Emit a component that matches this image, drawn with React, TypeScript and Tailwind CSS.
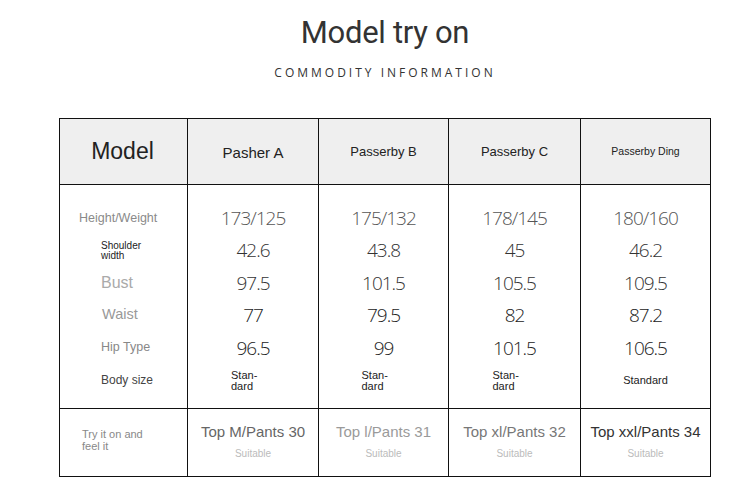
import React from 'react';

const models = [
  { name: 'Pasher A', nameCls: 'text-[15px]', hw: '173/125', shoulder: '42.6', bust: '97.5', waist: '77', hip: '96.5', split: true, size: 'Top M/Pants 30', sizeCls: 'text-[#666]' },
  { name: 'Passerby B', nameCls: 'text-[13px]', hw: '175/132', shoulder: '43.8', bust: '101.5', waist: '79.5', hip: '99', split: true, size: 'Top l/Pants 31', sizeCls: 'text-[#9a9a9a]' },
  { name: 'Passerby C', nameCls: 'text-[13px]', hw: '178/145', shoulder: '45', bust: '105.5', waist: '82', hip: '101.5', split: true, size: 'Top xl/Pants 32', sizeCls: 'text-[#777]' },
  { name: 'Passerby Ding', nameCls: 'text-[10.5px]', hw: '180/160', shoulder: '46.2', bust: '109.5', waist: '87.2', hip: '106.5', split: false, size: 'Top xxl/Pants 34', sizeCls: 'text-[#333]' },
];

const sans = "font-['Liberation_Sans',Arial,sans-serif]";
const light = "font-['Open_Sans',sans-serif] font-light tracking-[-1px]";

function Row({ children, className = '' }: { children: React.ReactNode; className?: string }) {
  return <div className={`h-[32.4px] flex items-center ${className}`}>{children}</div>;
}

export default function App() {
  return (
    <div className="w-[750px] h-[501px] bg-white overflow-hidden">
      <div className="ml-[59px] w-[652px]">
        <h1 className="pt-[14px] text-center text-[31px] leading-[38px] text-[#333] font-['Roboto',sans-serif] tracking-[-0.3px]">
          Model try on
        </h1>
        <p className="mt-[13px] text-center text-[12px] leading-[16px] tracking-[3px] text-[#333] font-['Open_Sans',sans-serif]">
          COMMODITY INFORMATION
        </p>

        <div className="mt-[37px] border-[1.5px] border-[#111] grid grid-cols-[128px_131px_130px_132px_1fr]">
          {/* header */}
          <div className={`h-[66px] bg-[#efefef] border-r-[1.5px] border-b-[1.5px] border-[#111] flex items-center justify-center text-[23px] text-[#222] ${sans}`}>
            <span className="pr-[2px]">Model</span>
          </div>
          {models.map((m, i) => (
            <div
              key={m.name}
              className={`h-[66px] bg-[#efefef] border-b-[1.5px] border-[#111] flex items-center justify-center text-[#222] ${sans} ${m.nameCls} ${i < 3 ? 'border-r-[1.5px]' : ''}`}
            >
              <span className={i === 0 ? 'pt-[3px]' : ''}>{m.name}</span>
            </div>
          ))}

          {/* body */}
          <div className={`pt-[17px] pb-[12px] border-r-[1.5px] border-b-[1.5px] border-[#111] ${sans}`}>
            <Row className="pl-[19px] text-[12.5px] text-[#8a8a8a]">Height/Weight</Row>
            <Row className="pl-[41px] text-[10px] leading-[10px] text-[#222]">
              <span>Shoulder<br />width</span>
            </Row>
            <Row className="pl-[41px] text-[16px] text-[#aaa]">Bust</Row>
            <Row className="pl-[42px] text-[14.5px] text-[#999]">Waist</Row>
            <Row className="pl-[41px] text-[12.5px] text-[#888]">Hip Type</Row>
            <Row className="pl-[41px] text-[12px] text-[#444]">Body size</Row>
          </div>
          {models.map((m, i) => (
            <div
              key={m.name}
              className={`pt-[17px] pb-[12px] border-b-[1.5px] border-[#111] flex flex-col items-center ${i < 3 ? 'border-r-[1.5px]' : ''}`}
            >
              <Row className={`text-[19px] text-[#555] ${light}`}>{m.hw}</Row>
              <Row className={`text-[19px] text-[#333] ${light}`}>{m.shoulder}</Row>
              <Row className={`text-[19px] text-[#333] ${light}`}>{m.bust}</Row>
              <Row className={`text-[19px] text-[#222] ${light}`}>{m.waist}</Row>
              <Row className={`text-[19px] text-[#222] ${light}`}>{m.hip}</Row>
              <Row className={`text-[11px] text-[#222] ${sans}`}>
                {m.split ? (
                  <span className="w-[44px] leading-[11px] pt-[2px]">Stan-<br />dard</span>
                ) : (
                  <span>Standard</span>
                )}
              </Row>
            </div>
          ))}

          {/* bottom */}
          <div className={`h-[67px] border-r-[1.5px] border-[#111] pl-[22px] pt-[19px] text-[11px] leading-[12px] text-[#888] ${sans}`}>
            Try it on and<br />feel it
          </div>
          {models.map((m, i) => (
            <div
              key={m.name}
              className={`h-[67px] border-[#111] flex flex-col items-center pt-[14px] ${sans} ${i < 3 ? 'border-r-[1.5px]' : ''}`}
            >
              <span className={`text-[15px] leading-[18px] ${m.sizeCls}`}>{m.size}</span>
              <span className="mt-[7px] text-[10px] leading-[12px] text-[#bbb]">Suitable</span>
            </div>
          ))}
        </div>
      </div>
    </div>
  );
}
